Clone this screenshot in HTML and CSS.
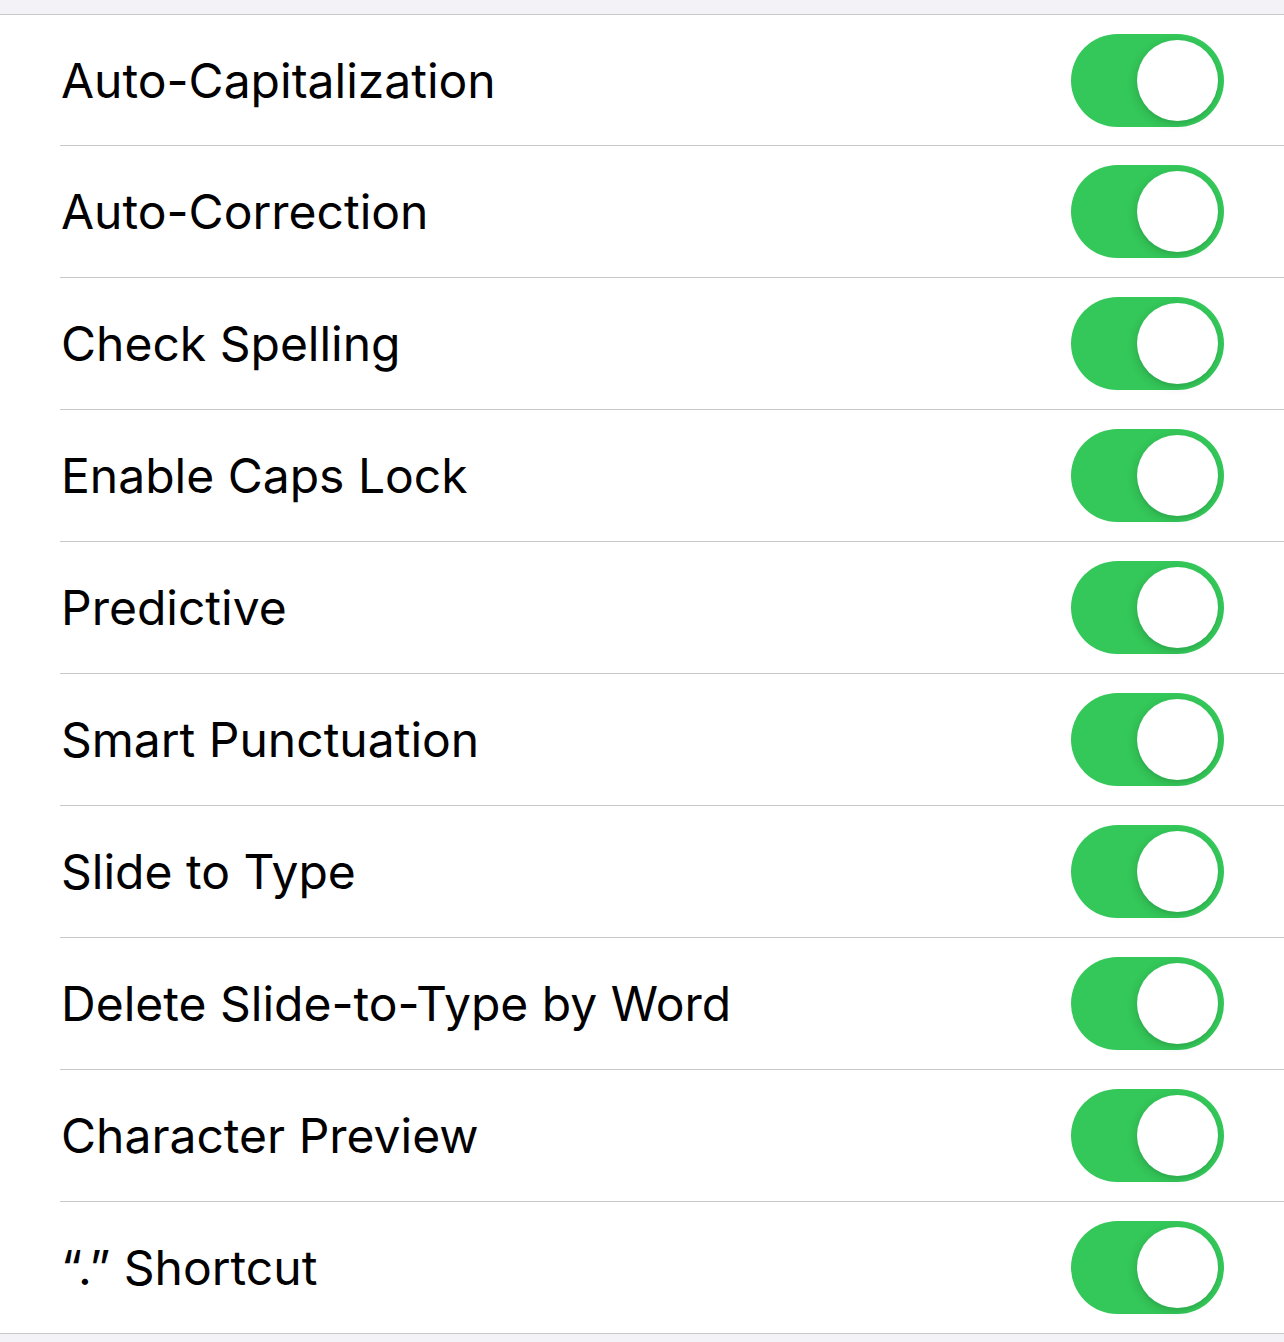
FILE: index.html
```html
<!DOCTYPE html>
<html lang="en">
<head>
<meta charset="utf-8">
<title>Keyboard Settings</title>
<link rel="stylesheet" href="styles.css">
</head>
<body>
<div class="top-gap"></div>
<ul class="list">
  <li class="row"><span class="label">Auto-Capitalization</span><span class="toggle on"><span class="knob"></span></span></li>
  <li class="row"><span class="label">Auto-Correction</span><span class="toggle on"><span class="knob"></span></span></li>
  <li class="row"><span class="label">Check Spelling</span><span class="toggle on"><span class="knob"></span></span></li>
  <li class="row"><span class="label">Enable Caps Lock</span><span class="toggle on"><span class="knob"></span></span></li>
  <li class="row"><span class="label">Predictive</span><span class="toggle on"><span class="knob"></span></span></li>
  <li class="row"><span class="label">Smart Punctuation</span><span class="toggle on"><span class="knob"></span></span></li>
  <li class="row"><span class="label">Slide to Type</span><span class="toggle on"><span class="knob"></span></span></li>
  <li class="row"><span class="label">Delete Slide-to-Type by Word</span><span class="toggle on"><span class="knob"></span></span></li>
  <li class="row"><span class="label">Character Preview</span><span class="toggle on"><span class="knob"></span></span></li>
  <li class="row"><span class="label">“.” Shortcut</span><span class="toggle on"><span class="knob"></span></span></li>
</ul>
</body>
</html>
```
FILE: styles.css
```css
html, body {
  margin: 0;
  padding: 0;
  background: #f2f2f7;
}
body {
  width: 1284px;
  height: 1342px;
  overflow: hidden;
  font-family: Inter, "Noto Sans", "Liberation Sans", sans-serif;
  color: #000;
}
.top-gap {
  height: 14px;
}
.list {
  list-style: none;
  margin: 0;
  padding: 0 0 0 60px;
  background: #fff;
  border-top: 1px solid #c8c7cc;
  border-bottom: 1px solid #c8c7cc;
}
.row {
  height: 131px;
  display: flex;
  align-items: center;
  justify-content: space-between;
  padding-right: 60px;
  border-bottom: 1px solid #c8c7cc;
}
.row:first-child {
  height: 130px;
}
.row:last-child {
  border-bottom: none;
}
.label {
  font-size: 48px;
  padding-left: 1px;
}
.toggle {
  width: 153px;
  height: 93px;
  border-radius: 47px;
  background: #34c759;
  display: flex;
  align-items: center;
  justify-content: flex-end;
  padding-right: 6px;
  box-sizing: border-box;
}
.knob {
  width: 81px;
  height: 81px;
  border-radius: 50%;
  background: #fff;
  box-shadow: -2px 3px 10px rgba(0, 0, 0, 0.12), 0 3px 2px rgba(0, 0, 0, 0.04);
}
```
